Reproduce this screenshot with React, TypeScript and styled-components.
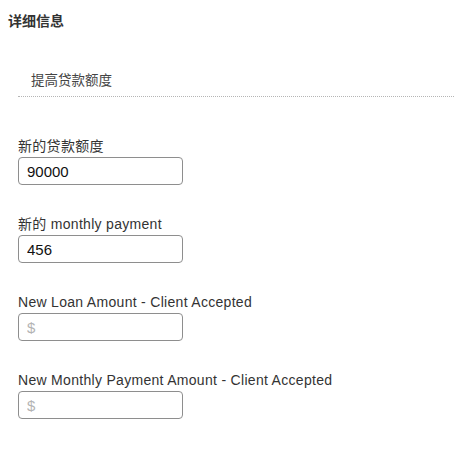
import { createGlobalStyle } from "styled-components";
import styled from "styled-components";

const GlobalStyle = createGlobalStyle`
  html, body {
    margin: 0;
    padding: 0;
    background: #ffffff;
  }
  body {
    font-family: "Liberation Sans", "Noto Sans CJK SC", sans-serif;
    color: #222;
  }
`;

const fields = [
  { label: "新的贷款额度", value: "90000" },
  { label: "新的 monthly payment", value: "456" },
  { label: "New Loan Amount - Client Accepted", value: "" },
  { label: "New Monthly Payment Amount - Client Accepted", value: "" },
];

export default function App() {
  return (
    <Page>
      <GlobalStyle />
      <Title>详细信息</Title>
      <Section>
        <SubHeader>提高贷款额度</SubHeader>
        <Fields>
          {fields.map((f, i) => (
            <Field key={i}>
              <Label>{f.label}</Label>
              <Input type="text" defaultValue={f.value} placeholder="$" />
            </Field>
          ))}
        </Fields>
      </Section>
    </Page>
  );
}

const Page = styled.div`
  width: 454px;
  min-height: 449px;
  box-sizing: border-box;
`;

const Title = styled.h3`
  margin: 0;
  padding: 13px 8px 0;
  font-size: 14px;
  line-height: 16px;
  font-weight: bold;
  color: #333;
`;

const Section = styled.div`
  margin-left: 18px;
  margin-top: 43px;
`;

const SubHeader = styled.div`
  padding: 0 0 7px 13px;
  font-size: 13.5px;
  line-height: 17px;
  color: #444;
  border-bottom: 1px dotted #b5b5b5;
`;

const Fields = styled.div`
  display: flex;
  flex-direction: column;
  gap: 31px;
  padding-top: 41px;
`;

const Field = styled.div`
  display: flex;
  flex-direction: column;
  gap: 2px;
`;

const Label = styled.label`
  font-size: 14px;
  line-height: 17px;
  letter-spacing: 0.3px;
  color: #333;
`;

const Input = styled.input`
  box-sizing: border-box;
  width: 165px;
  height: 28px;
  margin: 0;
  padding: 0 8px;
  border: 1px solid #8e8e8e;
  border-radius: 4px;
  font-family: "Liberation Sans", sans-serif;
  font-size: 15px;
  color: #111;
  background: #fff;
  outline: none;
  &::placeholder {
    color: #b3b3b3;
  }
`;
